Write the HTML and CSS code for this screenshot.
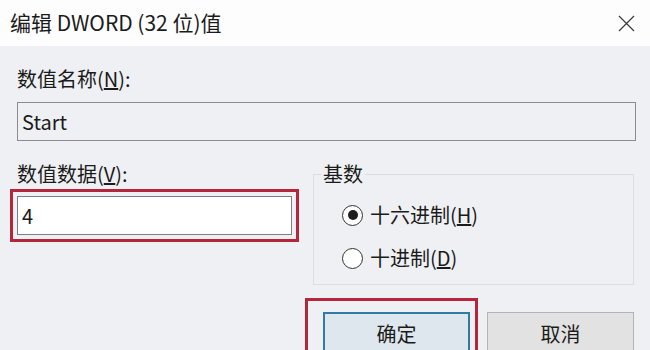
FILE: index.html
```html
<!DOCTYPE html>
<html lang="zh-CN">
<head>
  <meta charset="UTF-8" />
  <meta name="viewport" content="width=device-width, initial-scale=1.0">
  <title>编辑 DWORD (32 位)值</title>
  <link rel="stylesheet" href="styles.css">
</head>
<body>
  <div class="dialog">
    <div class="titlebar">
      <span class="title">编辑 DWORD (32 位)值</span>
      <svg class="close" width="17" height="17" viewBox="0 0 17 17">
        <path d="M1 1 L16 16 M16 1 L1 16" stroke="#3a3a3a" stroke-width="1.2" fill="none" />
      </svg>
    </div>
    <div class="content">
      <div class="label">数值名称(<u>N</u>):</div>
      <input class="field name" type="text" value="Start" readonly>
      <div class="row">
        <div class="data">
          <div class="label">数值数据(<u>V</u>):</div>
          <input class="field value mark" type="text" value="4">
        </div>
        <fieldset class="base">
          <legend>基数</legend>
          <div class="option"><span class="radio checked"></span>十六进制(<u>H</u>)</div>
          <div class="option"><span class="radio"></span>十进制(<u>D</u>)</div>
        </fieldset>
      </div>
      <div class="buttons">
        <div class="highlight">
          <div class="button default">确定</div>
        </div>
        <div class="button cancel">取消</div>
      </div>
    </div>
  </div>
</body>
</html>
```

FILE: styles.css
```css
html, body {
  margin: 0; padding: 0;
  width: 650px; height: 350px;
  overflow: hidden;
  font-family: "Noto Sans CJK SC", "Noto Sans", sans-serif;
  color: #1b1b1b;
  background: #eff0f3;
}
.titlebar {
  height: 46px;
  display: flex; align-items: center; justify-content: space-between;
  padding: 0 15px 0 10px;
  background: #fdfdfe;
  box-sizing: border-box;
}
.title {
  font-size: 21px; line-height: 26px;
  margin-top: -3px;
}
.close { display: block; }
.content {
  padding: 21px 14px 0 17px;
  font-size: 20px; line-height: 24px;
}
.label { height: 24px; }
.field {
  display: block;
  box-sizing: border-box;
  height: 39px;
  margin: 0;
  padding: 0 4px;
  font: inherit;
  color: #1b1b1b;
  border: 1px solid #8c8c8c;
  outline: none;
}
.name {
  width: 619px;
  margin-top: 11px;
  background: #eff0f3;
}
.row {
  display: flex;
  margin-top: 21px;
}
.data { width: 275px; }
.value {
  width: 275px;
  margin-top: 10px;
  background: #fff;
  border-color: #7a7f88;
}
.mark {
  outline: 3px solid #b3263c;
  outline-offset: 4px;
}
.base {
  width: 321px;
  box-sizing: border-box;
  margin: 0 0 0 21px;
  padding: 0 0 14px 28px;
  border: 1px solid #dcdde0;
}
.base legend {
  margin-left: -21px;
  padding: 0 2px;
  line-height: 24px;
}
.option {
  display: flex; align-items: center;
  height: 24px;
  margin-top: 19px;
}
.option:first-of-type { margin-top: 17px; }
.radio {
  width: 19px; height: 19px;
  border: 1px solid #333;
  border-radius: 50%;
  background: #fff;
  margin-right: 7px;
  display: flex; align-items: center; justify-content: center;
}
.radio.checked::after {
  content: "";
  width: 10px; height: 10px;
  border-radius: 50%;
  background: #1f1f1f;
}
.buttons {
  display: flex; justify-content: flex-end;
  margin-top: 13px;
  margin-right: 2px;
}
.highlight {
  border: 3px solid #b3263c;
  padding: 11px 5px 0 15px;
}
.button {
  width: 147px; height: 44px;
  box-sizing: border-box;
  display: flex; align-items: center; justify-content: center;
}
.default {
  border: 2px solid #2f7ba6;
  background: #dfe7ee;
}
.cancel {
  margin-left: 9px;
  margin-top: 14px;
  border: 1px solid #b4b4b4;
  background: #e2e2e2;
}
```
